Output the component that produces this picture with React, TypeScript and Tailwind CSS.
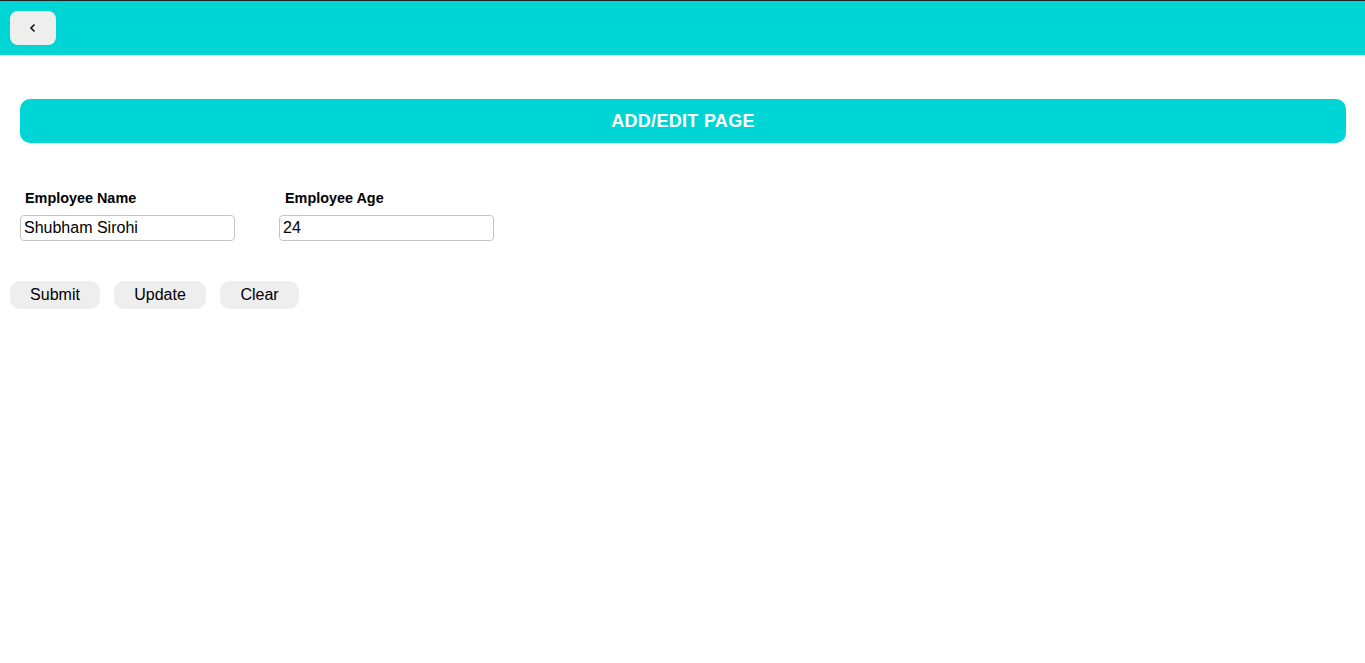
import React from 'react';

const Field = ({ label, value, pad }: { label: string; value: string; pad: string }) => {
    return (
        <div className="flex flex-col">
            <label className={`${pad} text-[14.4px] font-bold leading-[17px] text-black`}>{label}</label>
            <input
                defaultValue={value}
                className="mt-[8px] h-[26px] w-[215px] rounded-[4px] border border-[#c4c4c4] px-[3px] text-[16px] text-black outline-none"
            />
        </div>
    );
};

const App = () => {
    return (
        <div className="min-h-[663px] bg-white font-['Liberation_Sans',Arial,sans-serif]">
            <div className="h-[55px] border-t border-[#222] bg-[#00d5d6] pl-[10px] pt-[10px]">
                <button className="flex h-[34px] w-[46px] items-center justify-center rounded-[8px] bg-[#eeeeee] text-[18px] leading-none text-black">
                    <svg width="10" height="10" viewBox="0 0 10 10" fill="none">
                        <path d="M6.5 1.5 L3 5 L6.5 8.5" stroke="#111" strokeWidth="1.6" />
                    </svg>
                </button>
            </div>

            <div className="ml-5 mr-[19px] mt-[44px] flex h-[44px] items-center justify-center rounded-[10px] bg-[#00d5d6]">
                <h1 className="text-[18px] font-bold tracking-[0.3px] text-white">ADD/EDIT PAGE</h1>
            </div>

            <div className="ml-5 mt-[47px] flex gap-[44px]">
                <Field label="Employee Name" value="Shubham Sirohi" pad="pl-[5px]" />
                <Field label="Employee Age" value="24" pad="pl-[6px]" />
            </div>

            <div className="ml-[10px] mt-[40px] flex gap-[14px]">
                <button className="h-[28px] w-[90px] rounded-[10px] bg-[#eeeeee] text-[16px] text-black">Submit</button>
                <button className="h-[28px] w-[92px] rounded-[10px] bg-[#eeeeee] text-[16px] text-black">Update</button>
                <button className="h-[28px] w-[79px] rounded-[10px] bg-[#eeeeee] text-[16px] text-black">Clear</button>
            </div>
        </div>
    );
};

export default App;
